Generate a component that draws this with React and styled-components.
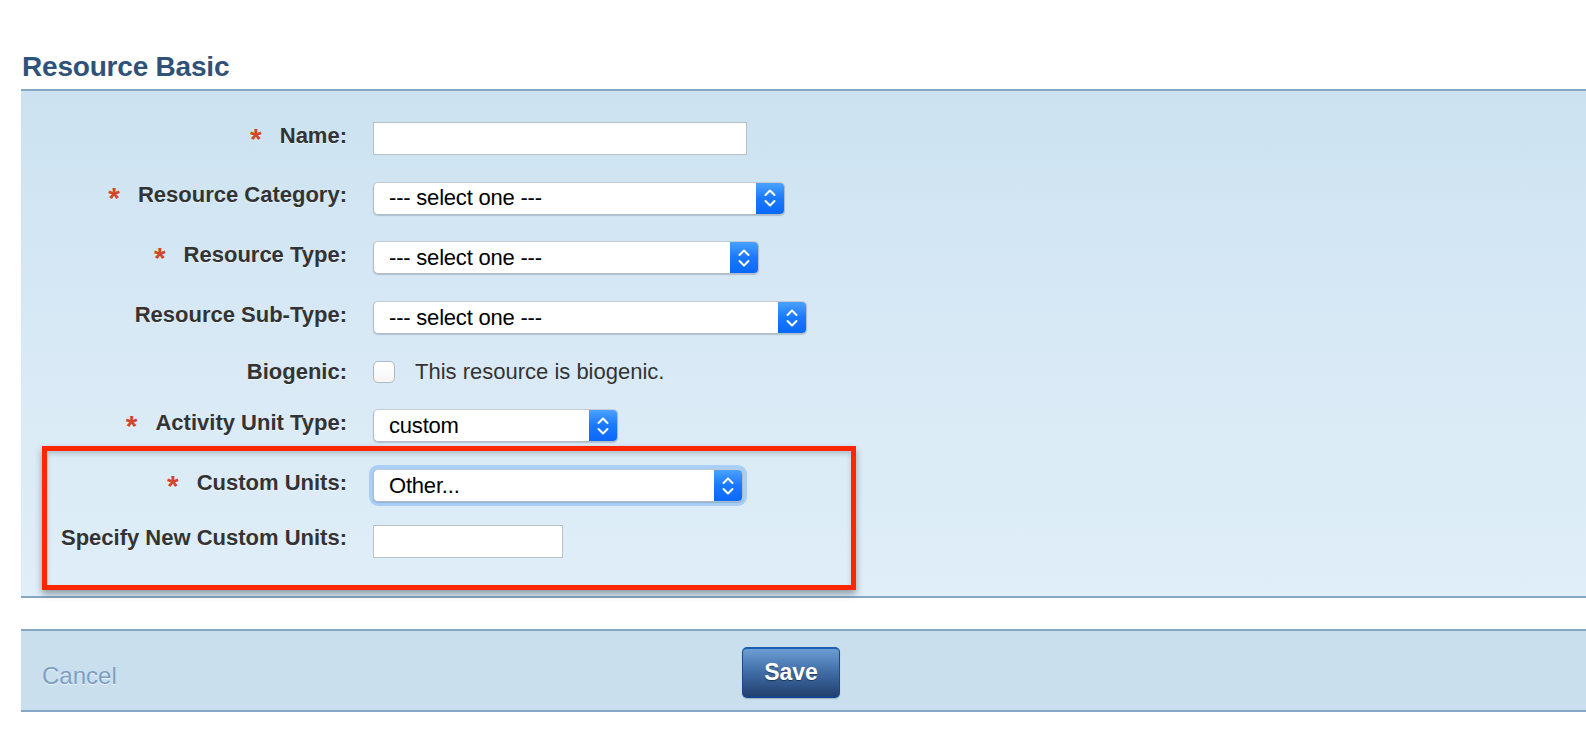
import React from 'react';
import styled, { createGlobalStyle } from 'styled-components';

const GlobalStyle = createGlobalStyle`
  body {
    margin: 0;
    background: #ffffff;
    font-family: "Liberation Sans", Arial, Helvetica, sans-serif;
  }
`

const Page = styled.div`
  width: 1586px;
  padding-left: 21px;
  box-sizing: border-box;
`

const Heading = styled.h2`
  margin: 51px 0 6px 1px;
  font-size: 28px;
  line-height: 32px;
  font-weight: 700;
  color: #30527a;
  letter-spacing: -0.2px;
`

const Panel = styled.div`
  border-top: 2px solid #87a8c4;
  border-bottom: 2px solid #87a8c4;
  background: linear-gradient(to bottom, #cce2f0 0%, #d9eaf6 55%, #dfeef8 100%);
  padding: 31px 0 38px 0;
  display: flex;
  flex-direction: column;
  gap: 26.7px;
`

const Row = styled.div`
  display: grid;
  grid-template-columns: 326px auto;
  column-gap: 26px;
  align-items: center;
  height: ${p => p.$short ? '22px' : '33px'};
`

const Label = styled.div`
  display: flex;
  justify-content: flex-end;
  align-items: center;
  font-size: 22px;
  line-height: 22px;
  font-weight: 700;
  color: #333333;
  text-shadow: 0 1px 0 rgba(255, 255, 255, 0.45);
  white-space: nowrap;
  position: relative;
  top: ${p => p.$short ? '0' : '-3px'};
`

const Star = styled.span`
  color: #d2462b;
  font-size: 30px;
  line-height: 1;
  margin-right: 18px;
  position: relative;
  top: 3px;
`

const TextBox = styled.div`
  width: ${p => p.$w}px;
  height: 33px;
  box-sizing: border-box;
  background: #ffffff;
  border: 1px solid #b9c0c6;
`

const Select = styled.div`
  width: ${p => p.$w}px;
  height: 33px;
  box-sizing: border-box;
  display: flex;
  align-items: stretch;
  background: #ffffff;
  border-radius: 5px;
  border: 1px solid #b3bcc6;
  border-top-color: #c3cad2;
  box-shadow: 0 1px 1px rgba(60, 80, 110, 0.25)${p => p.$focus ? ', 0 0 0 4px #a9cff6' : ''};
  overflow: hidden;
`

const SelectText = styled.div`
  flex: 1;
  display: flex;
  align-items: center;
  padding-left: 15px;
  font-size: 22px;
  color: #000000;
  letter-spacing: -0.2px;
`

const Arrows = styled.div`
  width: 28px;
  display: flex;
  align-items: center;
  justify-content: center;
  background: linear-gradient(to bottom, #4aa2ff 0%, #1a78ff 50%, #0a68fb 100%);
`

const CheckLine = styled.div`
  display: flex;
  align-items: center;
  gap: 20px;
  font-size: 22px;
  line-height: 22px;
  color: #333333;
`

const Check = styled.div`
  width: 22px;
  height: 22px;
  box-sizing: border-box;
  border-radius: 5px;
  border: 1px solid #b4b8bc;
  background: linear-gradient(to bottom, #ffffff, #f6f6f6);
`

// the red annotation sits over the two custom-unit rows
const Marked = styled.div`
  position: relative;
  display: flex;
  flex-direction: column;
  gap: 22.5px;
`

const Annotation = styled.div`
  position: absolute;
  left: 21px;
  top: -23px;
  width: 814px;
  height: 144px;
  box-sizing: border-box;
  border: 5px solid #ff2600;
  box-shadow: 0 4px 7px rgba(0, 0, 0, 0.35), inset 0 3px 5px rgba(0, 0, 0, 0.18);
  pointer-events: none;
`

const Footer = styled.div`
  box-sizing: border-box;
  margin-top: 31px;
  border-top: 2px solid #87a8c4;
  border-bottom: 2px solid #87a8c4;
  background: #c9dfed;
  height: 83px;
  padding: 5px 0 0 21px;
  display: grid;
  grid-template-columns: 700px auto;
  align-items: center;
`

const Cancel = styled.a`
  font-size: 24px;
  color: #7d9fc2;
  text-shadow: 0 1px 1px rgba(255, 255, 255, 0.7);
  margin-top: 6px;
`

const SaveButton = styled.button`
  width: 98px;
  height: 51px;
  border-radius: 5px;
  border: 1px solid #1b4a8c;
  border-top: 2px solid #1c5fb0;
  border-bottom: 2px solid #16468a;
  background: linear-gradient(to bottom, #6b9dd2 0%, #3f6ca6 50%, #23416f 100%);
  color: #ffffff;
  font-family: "Liberation Sans", Arial, sans-serif;
  font-size: 23px;
  font-weight: 700;
  text-shadow: 0 1px 1px rgba(0, 0, 0, 0.45);
  box-shadow: 0 1px 1px rgba(0, 0, 0, 0.2);
`

const Chevrons = () => (
  <svg width="14" height="22" viewBox="0 0 14 22">
    <path d="M2.5 8 L7 3.5 L11.5 8" fill="none" stroke="#fff" strokeWidth="2" strokeLinecap="round" strokeLinejoin="round" />
    <path d="M2.5 14 L7 18.5 L11.5 14" fill="none" stroke="#fff" strokeWidth="2" strokeLinecap="round" strokeLinejoin="round" />
  </svg>
)

const Dropdown = ({ w, value, focus }) => (
  <Select $w={w} $focus={focus}>
    <SelectText>{value}</SelectText>
    <Arrows><Chevrons /></Arrows>
  </Select>
)

const Field = ({ label, required, short, children }) => (
  <Row $short={short}>
    <Label $short={short}>{required && <Star>*</Star>}{label}</Label>
    <div>{children}</div>
  </Row>
)

const App = () => (
  <Page>
    <GlobalStyle />
    <Heading>Resource Basic</Heading>
    <Panel>
      <Field label="Name:" required><TextBox $w={374} /></Field>
      <Field label="Resource Category:" required><Dropdown w={412} value="--- select one ---" /></Field>
      <Field label="Resource Type:" required><Dropdown w={386} value="--- select one ---" /></Field>
      <Field label="Resource Sub-Type:"><Dropdown w={434} value="--- select one ---" /></Field>
      <Field label="Biogenic:" short>
        <CheckLine><Check />This resource is biogenic.</CheckLine>
      </Field>
      <Field label="Activity Unit Type:" required><Dropdown w={245} value="custom" /></Field>
      <Marked>
        <Field label="Custom Units:" required><Dropdown w={370} value="Other..." focus /></Field>
        <Field label="Specify New Custom Units:"><TextBox $w={190} /></Field>
        <Annotation />
      </Marked>
    </Panel>
    <Footer>
      <Cancel>Cancel</Cancel>
      <SaveButton>Save</SaveButton>
    </Footer>
  </Page>
)

export default App;
